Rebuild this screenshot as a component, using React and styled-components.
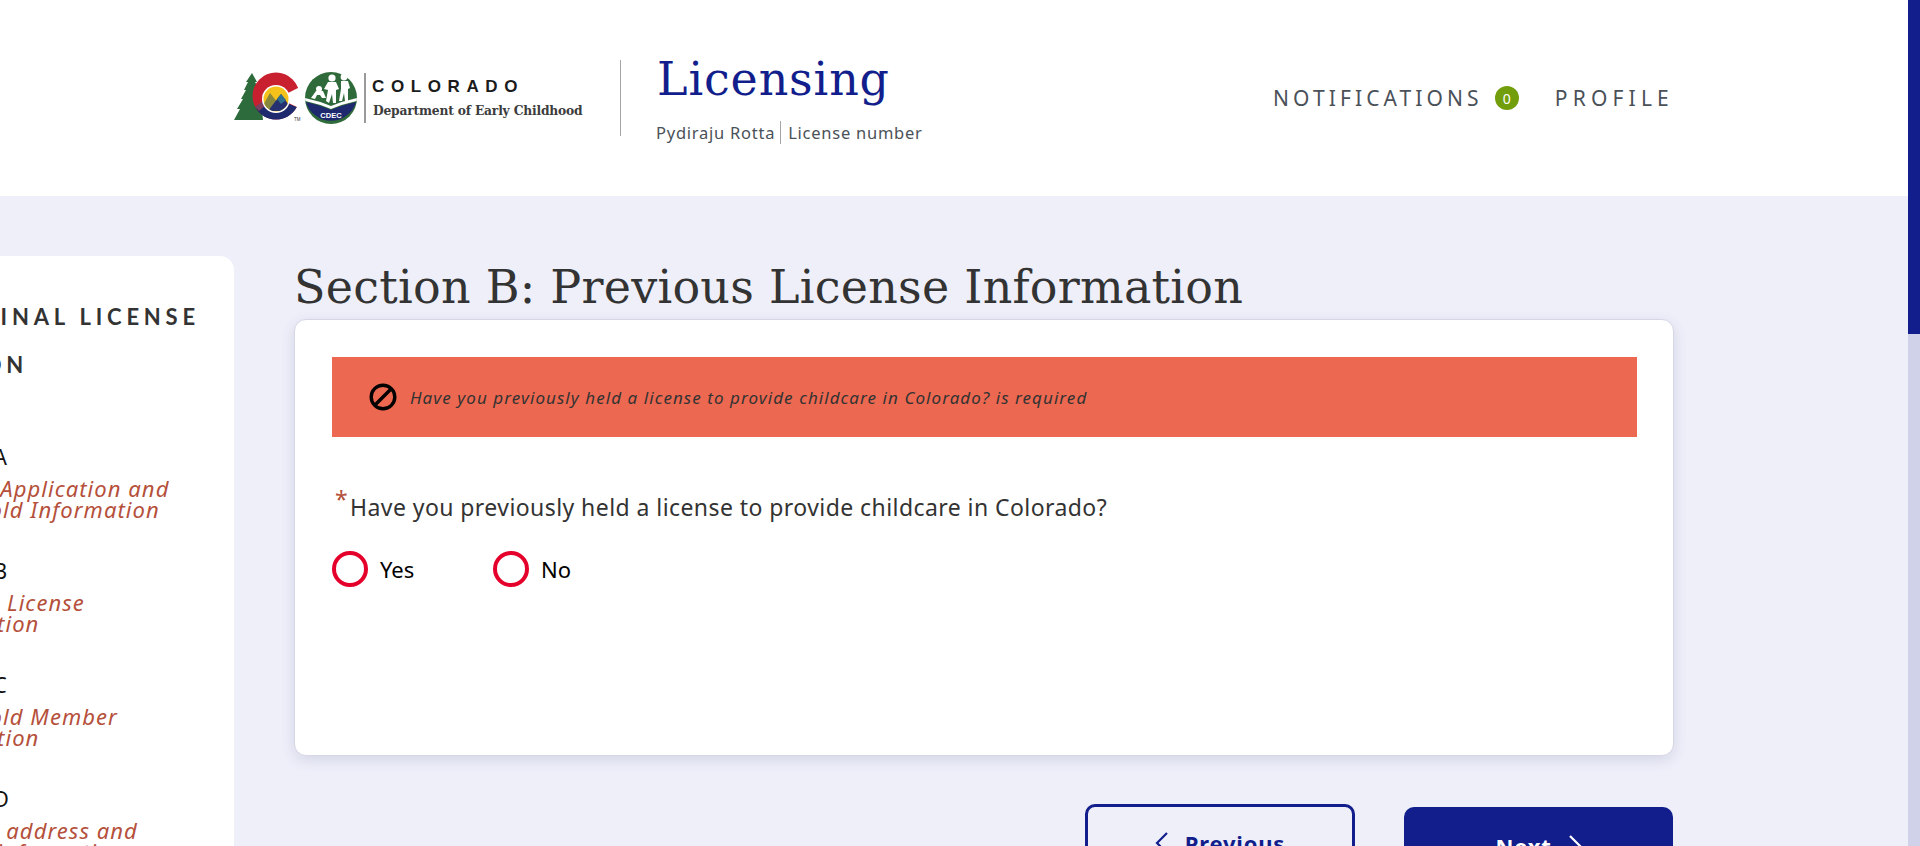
import React from "react";
import styled, { createGlobalStyle } from "styled-components";

const sans = `"Noto Sans", "Open Sans", sans-serif`;
const slab = `"DejaVu Serif", "Liberation Serif", serif`;
const navy = "#111e8c";

const Global = createGlobalStyle`
  html, body { margin: 0; padding: 0; height: 100%; overflow: hidden; background: #eeeff9; }
  #root { height: 100%; }
  * { box-sizing: border-box; }
`;

const Page = styled.div`
  display: flex;
  width: 1920px;
  height: 846px;
  overflow: hidden;
  font-family: ${sans};
`;
const Viewport = styled.div`
  width: 1908px;
  display: flex;
  flex-direction: column;
  background: #eeeff9;
`;
const ScrollTrack = styled.div`
  width: 12px;
  background: #cfd2e8;
`;
const ScrollThumb = styled.div`
  height: 334px;
  background: ${navy};
`;

const Header = styled.header`
  flex: none;
  height: 196px;
  background: #fff;
  display: flex;
  align-items: flex-start;
  padding-left: 233px;
`;
const Logo = styled.div`
  margin-top: 71px;
  display: flex;
  width: 351px;
  height: 54px;
`;
const Wordmark = styled.div`
  display: flex;
  flex-direction: column;
  margin-left: -2px;
`;
const WordTop = styled.div`
  font: 700 17px/16px "Liberation Sans", sans-serif;
  letter-spacing: 6.6px;
  color: #1b1b1b;
  margin-top: 8px;
  white-space: nowrap;
`;
const WordBottom = styled.div`
  font: 700 12.3px/14px ${slab};
  color: #3c3c3c;
  margin: 9px 0 0 1px;
  white-space: nowrap;
  letter-spacing: -0.2px;
`;
const Separator = styled.div`
  width: 1px;
  height: 76px;
  margin: 60px 0 0 36px;
  background: #a5a5a5;
`;
const Brand = styled.div`
  margin: 52px 0 0 36px;
  display: flex;
  flex-direction: column;
`;
const BrandTitle = styled.div`
  font: 400 46px/54px ${slab};
  letter-spacing: 0.85px;
  color: ${navy};
`;
const BrandSub = styled.div`
  display: flex;
  align-items: center;
  margin-top: 15px;
  margin-left: -1px;
  font-size: 16.5px;
  line-height: 23px;
  letter-spacing: 0.75px;
  color: #4a5158;
`;
const BrandName = styled.span`
  padding-right: 5px;
  border-right: 1px solid #a5a5a5;
  margin-right: 7px;
`;
const Nav = styled.nav`
  margin-left: auto;
  margin-right: 234px;
  margin-top: 85px;
  display: flex;
  align-items: center;
`;
const NavLink = styled.span`
  font-size: 21px;
  line-height: 26px;
  letter-spacing: ${(p) => p.$spacing}px;
  color: #4a5158;
`;
const Badge = styled.span`
  width: 24px;
  height: 24px;
  margin: 0 36px 0 12px;
  border-radius: 50%;
  background: #739e0b;
  color: #fff;
  font-size: 14px;
  display: flex;
  align-items: center;
  justify-content: center;
`;

const Body = styled.div`
  flex: 1;
  display: flex;
  min-height: 0;
`;
const Sidebar = styled.aside`
  flex: none;
  width: 234px;
  margin-top: 60px;
  background: #fff;
  border-radius: 0 14px 0 0;
  overflow: hidden;
`;
const SideInner = styled.div`
  margin-left: -84px;
  width: 318px;
  padding-top: 37px;
`;
const SideTitle = styled.div`
  margin-left: ${(p) => p.$indent}px;
  font: 700 22px/48px Lato, sans-serif;
  letter-spacing: 4.8px;
  color: #333;
  white-space: nowrap;
`;
const SideList = styled.div`
  margin-top: 55px;
`;
const SideSection = styled.div`
  height: 114px;
`;
const SideHead = styled.div`
  font-size: 21px;
  line-height: 27px;
  color: #111;
`;
const SideDesc = styled.div`
  margin: 7px 0 0 -6px;
  font-size: 22px;
  line-height: 21px;
  letter-spacing: 1.05px;
  font-style: italic;
  color: #b5503b;
  white-space: nowrap;
`;

const Main = styled.main`
  flex: none;
  width: 1380px;
  margin-left: 60px;
`;
const Heading = styled.h1`
  margin: 58px 0 0;
  height: 65px;
  font: 400 46px/66px ${slab};
  letter-spacing: 0.25px;
  color: #333;
  white-space: nowrap;
`;
const Card = styled.section`
  height: 437px;
  background: #fff;
  border-radius: 12px;
  border: 1px solid #d6d7e4;
  box-shadow: 0 4px 14px rgba(60, 64, 120, 0.14);
  padding: 37px 36px 0 37px;
`;
const Alert = styled.div`
  height: 80px;
  background: #ed6850;
  display: flex;
  align-items: center;
  padding-left: 37px;
  font-size: 17px;
  font-style: italic;
  letter-spacing: 1.06px;
  color: #333;
`;
const AlertIcon = styled.svg`
  width: 28px;
  height: 28px;
  margin-right: 13px;
  flex: none;
`;
const Question = styled.div`
  display: flex;
  margin-top: 55px;
  font-size: 23px;
  line-height: 30px;
  letter-spacing: 0.43px;
  color: #333;
`;
const Star = styled.span`
  color: #b5503b;
  width: 15px;
  margin-left: 3px;
  margin-top: -8px;
`;
const Options = styled.div`
  display: flex;
  margin-top: 29px;
`;
const Option = styled.label`
  display: flex;
  align-items: center;
  width: 161px;
  font-size: 22px;
  color: #000;
`;
const Radio = styled.span`
  width: 36px;
  height: 36px;
  margin-right: 12px;
  border-radius: 50%;
  border: 4px solid #e4002b;
  background: #fff;
`;
const Actions = styled.div`
  display: flex;
  justify-content: flex-end;
  gap: 49px;
  margin-top: 48px;
  padding-right: 1px;
  align-items: flex-start;
`;
const Button = styled.button`
  width: ${(p) => (p.$primary ? "269px" : "270px")};
  height: 78px;
  margin-top: ${(p) => (p.$primary ? "3px" : "0")};
  border-radius: 10px;
  border: ${(p) => (p.$primary ? "none" : `3px solid ${navy}`)};
  background: ${(p) => (p.$primary ? navy : "transparent")};
  color: ${(p) => (p.$primary ? "#fff" : navy)};
  font: 700 22px/28px ${sans};
  letter-spacing: 0.8px;
  display: flex;
  align-items: center;
  justify-content: center;
  gap: 16px;
`;

const Chevron = ({ left }) => (
  <svg width="14" height="24" viewBox="0 0 14 24" fill="none" stroke="currentColor" strokeWidth="2.2">
    <path d={left ? "M12 2 L2 12 L12 22" : "M2 2 L12 12 L2 22"} />
  </svg>
);

const LogoMark = () => (
  <svg width="130" height="54" viewBox="0 0 130 54">
    <defs>
      <clipPath id="sun"><circle cx="43" cy="28" r="12.5" /></clipPath>
    </defs>
    <polygon fill="#2e6b3c" points="19,2 24,11 22,11 27,19 25,19 30,28 28,28 30,49 1,49 7,38 4,38 10,28 8,28 13,19 11,19 15,11 13,11" />
    <circle cx="43" cy="25" r="23.5" fill="#c8202f" />
    <path d="M22.2 36 A23.5 23.5 0 0 0 63.8 36 L43 28 Z" fill="#1f2a6e" />
    <path d="M22 36 L30 30 L33 34 L26 40 Z" fill="#7c3f5e" />
    <polygon points="45,27 75,12 75,36 64,36" fill="#fff" />
    <circle cx="43" cy="28" r="14" fill="#fff" />
    <g clipPath="url(#sun)">
      <rect x="28" y="13" width="30" height="28" fill="#f4c21a" />
      <polygon points="28,38 37,22 45,32 45,38" fill="#87883c" />
      <polygon points="35,40 48,23 60,40" fill="#24306f" />
      <polygon points="48,23 53,29 48,33 44,28" fill="#2f6f8f" />
    </g>
    <text x="61" y="50" fontSize="4.5" fill="#333" fontFamily="Liberation Sans, sans-serif">TM</text>
    <circle cx="98" cy="27" r="26" fill="#2f6b3a" />
    <path d="M72.4 30 Q86 33 98 38 Q110 33 123.6 30 L124 27 Q110 30 98 35 Q86 30 72 27 Z" fill="#fff" />
    <path d="M73 31 Q87 34 98 39 Q109 34 123 31 A26 26 0 0 1 73 31 Z" fill="#1f2a6e" />
    <g fill="#fff">
      <circle cx="86" cy="18" r="3" />
      <path d="M78 27 L83 20 L90 20 L93 27 L89 27 L87 24 L84 24 L82 28 Z" />
      <circle cx="99" cy="7" r="3.6" />
      <path d="M95 11 L103 11 L106 18 L103 19 L103 32 L100 32 L99 23 L96 32 L93 30 L95 19 L91 18 Z" />
      <circle cx="111" cy="6" r="3.4" />
      <path d="M108 10 L115 10 L117 17 L115 18 L115 30 L112 30 L111 22 L109 30 L106 30 L108 18 Z" />
    </g>
    <text x="98" y="47" textAnchor="middle" fontSize="7.5" fontWeight="700" fill="#fff" fontFamily="Liberation Sans, sans-serif">CDEC</text>
  </svg>
);

const LogoRule = styled.div`
  width: 1.5px;
  height: 50px;
  margin: 2px 8.5px 0 1px;
  background: #9a9a9a;
`;

const sections = [
  ["Section A", "General Application and", "Household Information"],
  ["Section B", "Previous License", "Information"],
  ["Section C", "Household Member", "Information"],
  ["Section D", "Provider address and", "contact information"],
];

export default function App() {
  return (
    <Page>
      <Global />
      <Viewport>
        <Header>
          <Logo>
            <LogoMark />
            <LogoRule />
            <Wordmark>
              <WordTop>COLORADO</WordTop>
              <WordBottom>Department of Early Childhood</WordBottom>
            </Wordmark>
          </Logo>
          <Separator />
          <Brand>
            <BrandTitle>Licensing</BrandTitle>
            <BrandSub>
              <BrandName>Pydiraju Rotta</BrandName>
              <span>License number</span>
            </BrandSub>
          </Brand>
          <Nav>
            <NavLink $spacing={4.1}>NOTIFICATIONS</NavLink>
            <Badge>0</Badge>
            <NavLink $spacing={5.2}>PROFILE</NavLink>
          </Nav>
        </Header>
        <Body>
          <Sidebar>
            <SideInner>
              <SideTitle $indent={11}>ORIGINAL LICENSE</SideTitle>
              <SideTitle $indent={-84}>APPLICATION</SideTitle>
              <SideList>
                {sections.map(([h, a, b]) => (
                  <SideSection key={h}>
                    <SideHead>{h}</SideHead>
                    <SideDesc>{a}<br />{b}</SideDesc>
                  </SideSection>
                ))}
              </SideList>
            </SideInner>
          </Sidebar>
          <Main>
            <Heading>Section B: Previous License Information</Heading>
            <Card>
              <Alert>
                <AlertIcon viewBox="0 0 28 28" fill="none" stroke="#000" strokeWidth="3.4">
                  <circle cx="14" cy="14" r="11.8" />
                  <path d="M6 22 L22 6" />
                </AlertIcon>
                Have you previously held a license to provide childcare in Colorado? is required
              </Alert>
              <Question>
                <Star>*</Star>
                Have you previously held a license to provide childcare in Colorado?
              </Question>
              <Options>
                <Option><Radio />Yes</Option>
                <Option><Radio />No</Option>
              </Options>
            </Card>
            <Actions>
              <Button><Chevron left />Previous</Button>
              <Button $primary>Next<Chevron /></Button>
            </Actions>
          </Main>
        </Body>
      </Viewport>
      <ScrollTrack><ScrollThumb /></ScrollTrack>
    </Page>
  );
}
